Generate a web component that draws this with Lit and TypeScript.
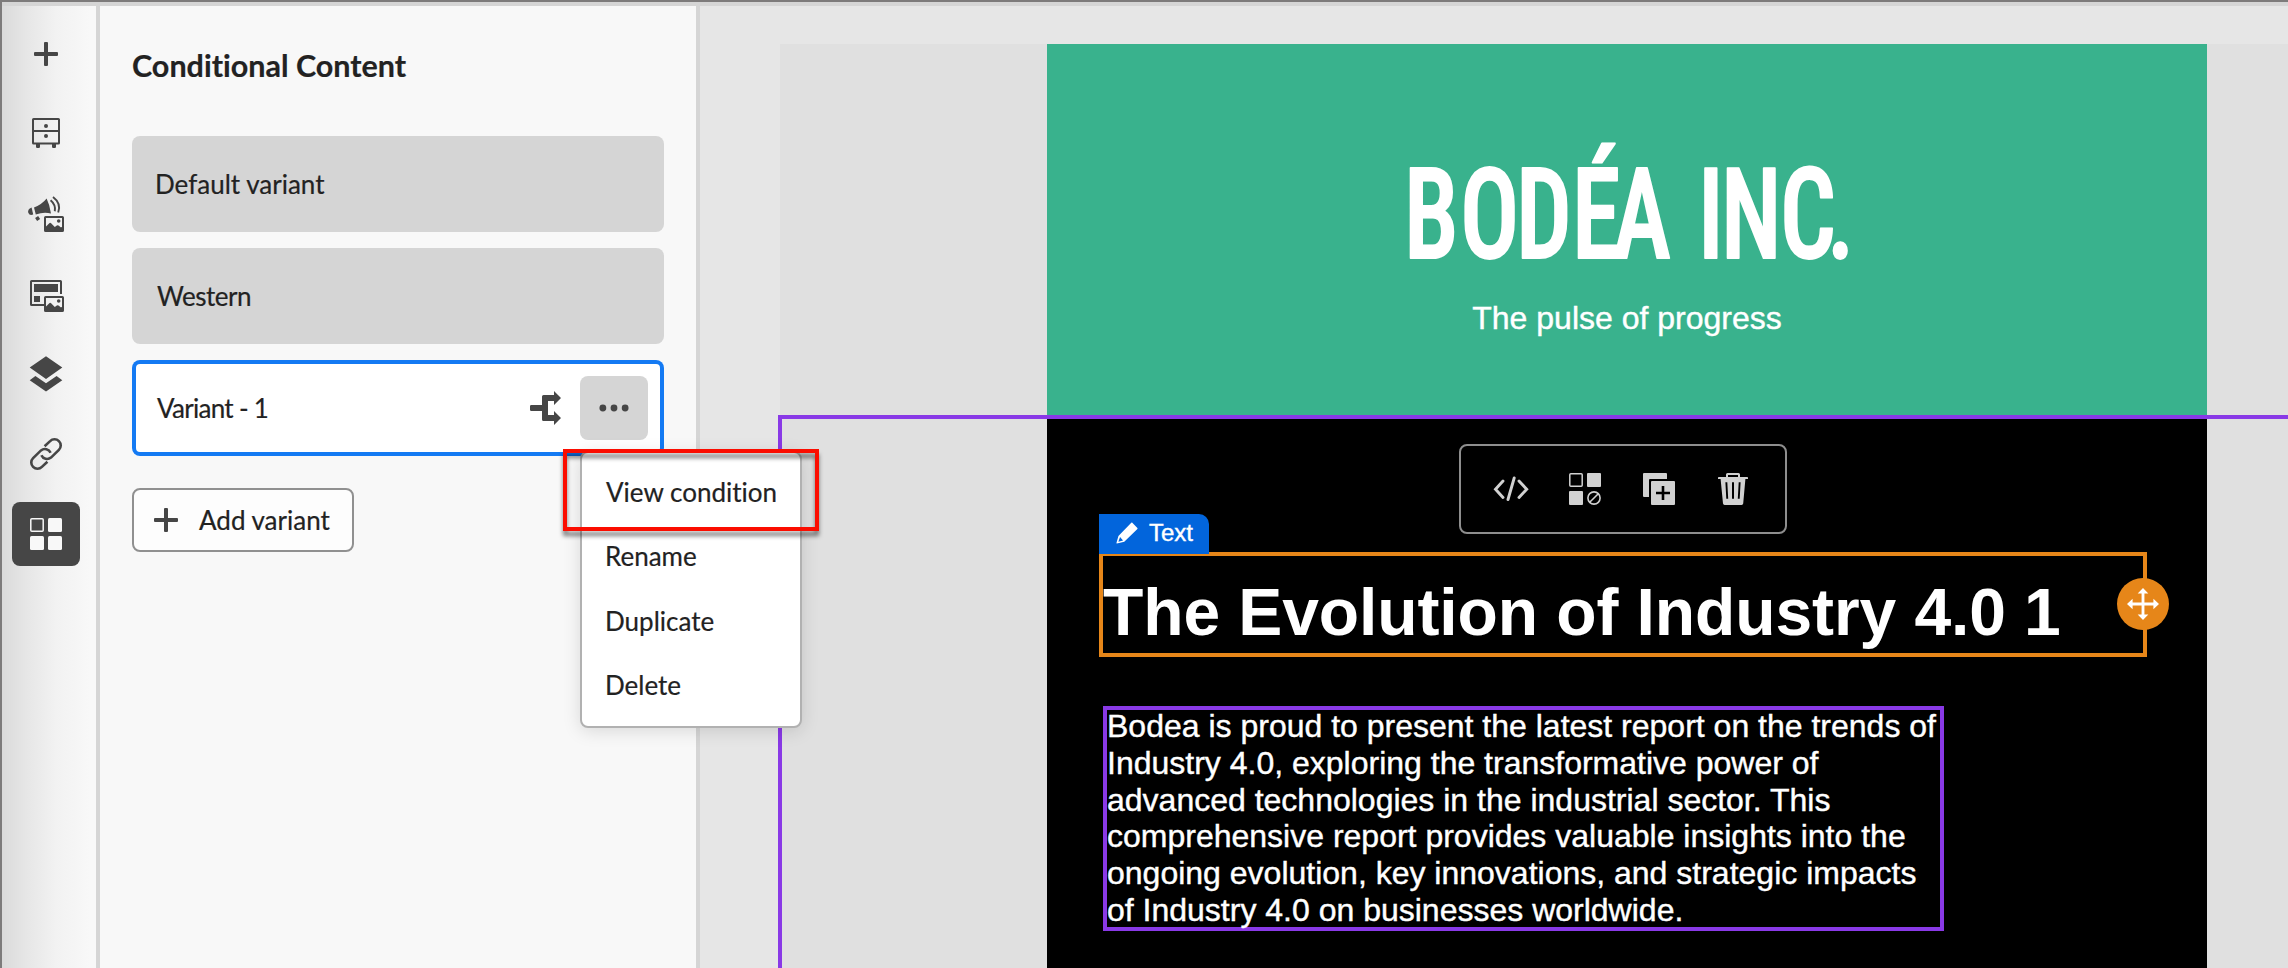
import { LitElement, html, svg, css } from "lit";
import { customElement, property } from "lit/decorators.js";
import { classMap } from "lit/directives/class-map.js";

const picture = svg`
  <rect x="17" y="21" width="18" height="14" rx=".6" fill="none" stroke="currentColor" stroke-width="2"/>
  <circle cx="30.7" cy="25" r="1.8"/>
  <path d="M17 31.500L21.300 27.200Q22.200 26.400 23.100 27.300L26.800 31 28.800 29.600Q29.900 29 31 29.800L32.500 31.200 35 31V35H17z"/>`;

const icons: Record<string, unknown> = {
  plus: svg`<path d="M17 6h2a1 1 0 0 1 1 1v9h9a1 1 0 0 1 1 1v2a1 1 0 0 1-1 1h-9v9a1 1 0 0 1-1 1h-2a1 1 0 0 1-1-1v-9H7a1 1 0 0 1-1-1v-2a1 1 0 0 1 1-1h9V7a1 1 0 0 1 1-1z"/>`,
  drawers: svg`
    <rect x="5" y="3" width="26" height="24.500" rx=".6" fill="none" stroke="currentColor" stroke-width="2"/>
    <path d="M5 14h26v2H5z"/><circle cx="18" cy="10" r="2"/><circle cx="18" cy="20" r="2"/>
    <path d="M8 28h4v2.800q0 1.200-1.200 1.200H9.200Q8 32 8 30.800zM24 28h4v2.800q0 1.200-1.200 1.200h-1.600Q24 32 24 30.800z"/>`,
  campaign: svg`
    <path d="M18.600 2.600Q21.800 9 23 17.600 16 15.800 7.800 18.400L6 11.600Q14 8.500 18.600 2.600z"/>
    <path d="M3.600 11.400L5.200 18.600Q1.500 20 .3 16.800-.8 13 3.600 11.400z"/>
    <path d="M8.600 21l2 3" fill="none" stroke="currentColor" stroke-width="3.600"/>
    <path d="M22.600 4.200q5.400 4.600 4.200 11M25 .9q8.600 6.500 5.200 15.600" fill="none" stroke="currentColor" stroke-width="1.900"/>
    ${picture}`,
  layout: svg`
    <path d="M33 18V5.600Q33 5 32.400 5H3.600Q3 5 3 5.600V28.400Q3 29 3.600 29H16" fill="none" stroke="currentColor" stroke-width="2"/>
    <path d="M6 8h24v8H6zM6 20h6v6H6z"/>${picture}`,
  layers: svg`<path d="M18 .3L34.300 11.600 18 23 1.700 11.600zM7.400 20L18 27.300 28.600 20 34.300 24.200 18 35.400 1.700 24.200z"/>`,
  link: svg`<path d="M16.600 10.300L22.100 5.100A6.200 6.200 0 0 1 30.900 13.900L23 21.600A6.200 6.200 0 0 1 13.400 19.200M19.400 25.700L13.900 30.900A6.200 6.200 0 0 1 5.100 22.100L13 14.400A6.200 6.200 0 0 1 22.600 16.800" fill="none" stroke="currentColor" stroke-width="2.600"/>`,
  blocks: svg`
    <rect x="2.800" y="2.800" width="12.400" height="12.400" rx="1" fill="none" stroke="currentColor" stroke-width="1.500"/>
    <rect x="20" y="2" width="14" height="14" rx="1.500"/><rect x="2" y="20" width="14" height="14" rx="1.500"/><rect x="20" y="20" width="14" height="14" rx="1.500"/>`,
  code: svg`<path d="M10 10L2.500 18.200 10 26.400M26 10L33.700 18.200 26 26.400M21.200 7L15 28.500" fill="none" stroke="currentColor" stroke-width="2.900" stroke-linecap="round"/>`,
  condition: svg`
    <rect x="2.800" y="2.800" width="12.400" height="12.400" rx="1" fill="none" stroke="currentColor" stroke-width="1.500"/>
    <rect x="20" y="2" width="14" height="14" rx="1"/><rect x="2" y="20" width="14" height="14" rx="1"/>
    <circle cx="27" cy="27" r="6.100" fill="none" stroke="currentColor" stroke-width="1.600"/>
    <path d="M22.700 31.300l8.600-8.600" stroke="currentColor" stroke-width="1.600"/>`,
  copy: svg`
    <path d="M3 2h22a1 1 0 0 1 1 1v5H9a1 1 0 0 0-1 1v17H3a1 1 0 0 1-1-1V3a1 1 0 0 1 1-1z"/>
    <path fill-rule="evenodd" d="M11 10h22a1 1 0 0 1 1 1v22a1 1 0 0 1-1 1H11a1 1 0 0 1-1-1V11a1 1 0 0 1 1-1zM20.700 15v5.700H15v2.600h5.700V29h2.600v-5.700H29v-2.600h-5.700V15z"/>`,
  trash: svg`
    <path d="M3.800 6H11V3.500Q11 2 12.500 2h11Q25 2 25 3.500V6h7.200q.8 0 .8.800V8H3V6.800Q3 6 3.800 6zM13 4v2h10V4z" fill-rule="evenodd"/>
    <path fill-rule="evenodd" d="M5.600 8H30.400L28.200 32.600Q28 34 26.600 34H9.600Q8.200 34 8 32.600zM10.400 11.200l.9 16.600h1.900l-.9-16.600zM17 11.200v16.600h2V11.200zM23.700 11.200l-.9 16.600h1.900l.9-16.600z"/>`,
  fork: svg`<path d="M3.500 15H14V6.500Q14 5 15.500 5H26V1L33 8 26 15V11H20V25H26V21L33 28 26 35V31H15.500Q14 31 14 29.500V21H3.500Q2 21 2 20V16Q2 15 3.500 15z"/>`,
  more: svg`<circle cx="6.200" cy="18" r="3.600"/><circle cx="18" cy="18" r="3.600"/><circle cx="29.800" cy="18" r="3.600"/>`,
  pencil: svg`<path fill-rule="evenodd" d="M26.300 1L35 9.700Q35.600 10.500 35 11.300L13.500 32.500 1.500 35.300Q.6 35.400.7 34.500L4 22.800 25 1.200Q25.700.6 26.300 1zM6.600 24.600L3.900 32.300 11.600 30.100z"/>`,
  move: svg`<path d="M18 0l6 6.300h-4.400v10.100h10.100V12L36 18l-6.300 6v-4.400H19.600v10.100H24L18 36l-6-6.300h4.400V19.600H6.300V24L0 18l6.300-6v4.400h10.100V6.300H12z"/>`,
};

@customElement("ui-icon")
class UiIcon extends LitElement {
  static styles = css`
    :host { display: block; width: 36px; height: 36px; flex: none; }
    svg { display: block; width: 100%; height: 100%; fill: currentColor; overflow: visible; }
  `;
  @property() name = "plus";
  render() {
    return html`<svg viewBox="0 0 36 36" aria-hidden="true">${icons[this.name]}</svg>`;
  }
}

@customElement("nav-rail")
class NavRail extends LitElement {
  static styles = css`
    :host {
      display: flex; flex-direction: column; gap: 16px; width: 94px; box-sizing: border-box;
      padding: 16px 0 0 10px; color: #464646;
      background: linear-gradient(90deg, #dadada 0, #e6e6e6 24px, #f2f2f2 54px, #f8f8f8 88px);
    }
    .item { display: grid; place-items: center; width: 68px; height: 64px; border-radius: 8px; }
    .active { background: #464646; color: #f8f8f8; }
  `;
  render() {
    return ["plus", "drawers", "campaign", "layout", "layers", "link", "blocks"].map(
      (n) => html`<div class=${classMap({ item: true, active: n === "blocks" })}><ui-icon name=${n}></ui-icon></div>`
    );
  }
}

@customElement("variant-panel")
class VariantPanel extends LitElement {
  static styles = css`
    :host {
      display: flex; flex-direction: column; align-items: flex-start; box-sizing: border-box;
      width: 596px; padding: 38px 32px 0; background: #f8f8f8; color: #222;
      font: 26px Lato, "Open Sans", sans-serif; font-variant-ligatures: none; -webkit-text-stroke: .2px;
    }
    h1 { margin: 0 0 50px; font-size: 30.500px; line-height: 42px; font-weight: 700; white-space: nowrap; }
    .card {
      position: relative; display: flex; align-items: center; box-sizing: border-box; width: 532px; height: 96px;
      margin-bottom: 16px; padding: 0 16px 0 23px; border-radius: 8px; background: #d5d5d5; white-space: nowrap;
    }
    .card > span { flex: 1; }
    .western { letter-spacing: -.5px; padding-left: 25px; }
    .selected { background: #fff; box-shadow: inset 0 0 0 4px #147af3; padding-left: 25px; }
    .selected > span { letter-spacing: -.7px; }
    .fork { color: #464646; margin-right: 16px; }
    .more { display: grid; place-items: center; width: 68px; height: 64px; border-radius: 8px; background: #d5d5d5; color: #464646; }
    .more ui-icon { width: 34px; height: 34px; }
    .add {
      display: flex; align-items: center; box-sizing: border-box; width: 222px; height: 64px; margin-top: 16px;
      padding-left: 14px; gap: 15px; border: 2px solid #909090; border-radius: 8px; background: #fdfdfd; white-space: nowrap;
    }
    .add ui-icon { color: #464646; }
    .menu {
      position: absolute; z-index: 2; left: 448px; top: 91px; box-sizing: border-box; width: 222px; height: 277px;
      padding: 18px 0 0 23px; border: 2px solid #b1b1b1; border-radius: 8px; background: #fff;
      box-shadow: 0 3px 18px rgba(0,0,0,.13);
    }
    .menu div { height: 64.400px; line-height: 64.400px; margin-top: 0; }
    .menu div:first-child { margin-top: -11px; padding-left: 1px; }
    .marker {
      position: absolute; z-index: 3; left: 431px; top: 89px; box-sizing: border-box; width: 256px; height: 82px;
      border: 4px solid #fb0d00; filter: drop-shadow(0 5px 2px rgba(0,0,0,.5));
    }
  `;
  render() {
    return html`
      <h1>Conditional Content</h1>
      <div class="card"><span>Default variant</span></div>
      <div class="card western"><span>Western</span></div>
      <div class="card selected">
        <span>Variant - 1</span>
        <ui-icon class="fork" name="fork"></ui-icon>
        <div class="more"><ui-icon name="more"></ui-icon></div>
        <div class="menu">
          ${["View condition", "Rename", "Duplicate", "Delete"].map((t) => html`<div>${t}</div>`)}
        </div>
        <div class="marker"></div>
      </div>
      <div class="add"><ui-icon name="plus"></ui-icon>Add variant</div>
    `;
  }
}

@customElement("email-canvas")
class EmailCanvas extends LitElement {
  static styles = css`
    :host {
      display: flex; flex-direction: column; flex: 1; min-width: 0; box-sizing: border-box; padding: 38px 0 0 78px;
      overflow: hidden; background: #e6e6e6; color: #fff; font-family: "Liberation Sans", Arial, sans-serif;
    }
    .top { height: 371px; margin-left: 2px; padding-left: 267px; background: #e0e0e0; }
    .banner { display: flex; flex-direction: column; align-items: center; width: 1160px; height: 371px; background: #39b28d; }
    .logo { display: block; width: 460px; height: 150px; margin-top: 76px; overflow: visible; }
    .logo text {
      font-family: "Roboto", sans-serif; font-weight: 500; font-stretch: 75%; font-size: 126px; fill: #fff;
      stroke: #fff; stroke-width: 2px; stroke-linejoin: round;
    }
    .tagline { margin: 30px 0 0; font-size: 32px; line-height: 37px; -webkit-text-stroke: .4px; }
    .section { flex: 1; padding-left: 265px; border: solid #8939e6; border-width: 4px 0 0 4px; background: #e0e0e0; }
    .body { display: flex; flex-direction: column; align-items: flex-start; box-sizing: border-box; width: 1160px; height: 100%; padding: 25px 0 0 52px; background: #000; }
    .tools {
      display: flex; align-items: center; gap: 38px; box-sizing: border-box; width: 328px; height: 90px; margin-left: 360px;
      padding-left: 32px; border: 2px solid #8e8e8e; border-radius: 8px; color: #d1d1d1;
    }
    .heading {
      position: relative; box-sizing: border-box; width: 1048px; height: 105px; margin: 18px 0 49px; border: 4px solid #e68619;
      font-size: 66px; line-height: 97px; font-weight: 700; white-space: nowrap; padding-top: 8px; letter-spacing: -.1px;
    }
    .tag {
      position: absolute; left: -4px; top: -42px; display: flex; align-items: center; gap: 11px; box-sizing: border-box; width: 110px; height: 40px;
      padding: 0 0 3px 17px; border-radius: 0 10px 0 0; background: #0265dc; font-size: 24px; line-height: 30px; font-weight: 400;
      letter-spacing: 0; -webkit-text-stroke: .4px;
    }
    .tag ui-icon { width: 22px; height: 22px; }
    .handle {
      position: absolute; right: -26px; top: 22px; display: grid; place-items: center; width: 52px; height: 52px;
      border-radius: 50%; background: #e68619;
    }
    .handle ui-icon { width: 32px; height: 32px; }
    .copy {
      box-sizing: border-box; width: 841px; height: 225px; margin: 0 0 0 4px; border: 4px solid #8939e6;
      font-size: 32px; line-height: 36.800px; -webkit-text-stroke: .4px;
    }
    .copy p { margin: -2px 0 0; }
  `;
  render() {
    const sx = 0.78;
    const xs = [7, 63, 119, 175, 216, 280, 301, 324, 383, 430].map((x) => (x / sx).toFixed(1)).join(" ");
    return html`
      <div class="top">
        <div class="banner">
          <svg class="logo" viewBox="0 0 460 150">
            <text transform=${`scale(${sx} 1)`} x=${xs} y="138">BODÉA INC.</text>
          </svg>
          <p class="tagline">The pulse of progress</p>
        </div>
      </div>
      <div class="section">
        <div class="body">
          <div class="tools">
            ${["code", "condition", "copy", "trash"].map((n) => html`<ui-icon name=${n}></ui-icon>`)}
          </div>
          <div class="heading">
            The Evolution of Industry 4.0 1
            <div class="tag"><ui-icon name="pencil"></ui-icon>Text</div>
            <div class="handle"><ui-icon name="move"></ui-icon></div>
          </div>
          <div class="copy"><p>Bodea is proud to present the latest report on the trends of Industry 4.0, exploring the transformative power of advanced technologies in the industrial sector. This comprehensive report provides valuable insights into the ongoing evolution, key innovations, and strategic impacts of Industry 4.0 on businesses worldwide.</p></div>
        </div>
      </div>
    `;
  }
}

@customElement("app-root")
class AppRoot extends LitElement {
  static styles = css`
    :host {
      display: flex; box-sizing: border-box; width: 2288px; height: 968px; overflow: hidden; background: #d5d5d5;
      border-top: 2px solid #7d7b7b; border-left: 2px solid #7d7b7b; padding-top: 4px; gap: 4px;
    }
    variant-panel { position: relative; z-index: 1; background: #f8f8f8; }
  `;
  render() {
    return html`<nav-rail></nav-rail><variant-panel></variant-panel><email-canvas></email-canvas>`;
  }
}
